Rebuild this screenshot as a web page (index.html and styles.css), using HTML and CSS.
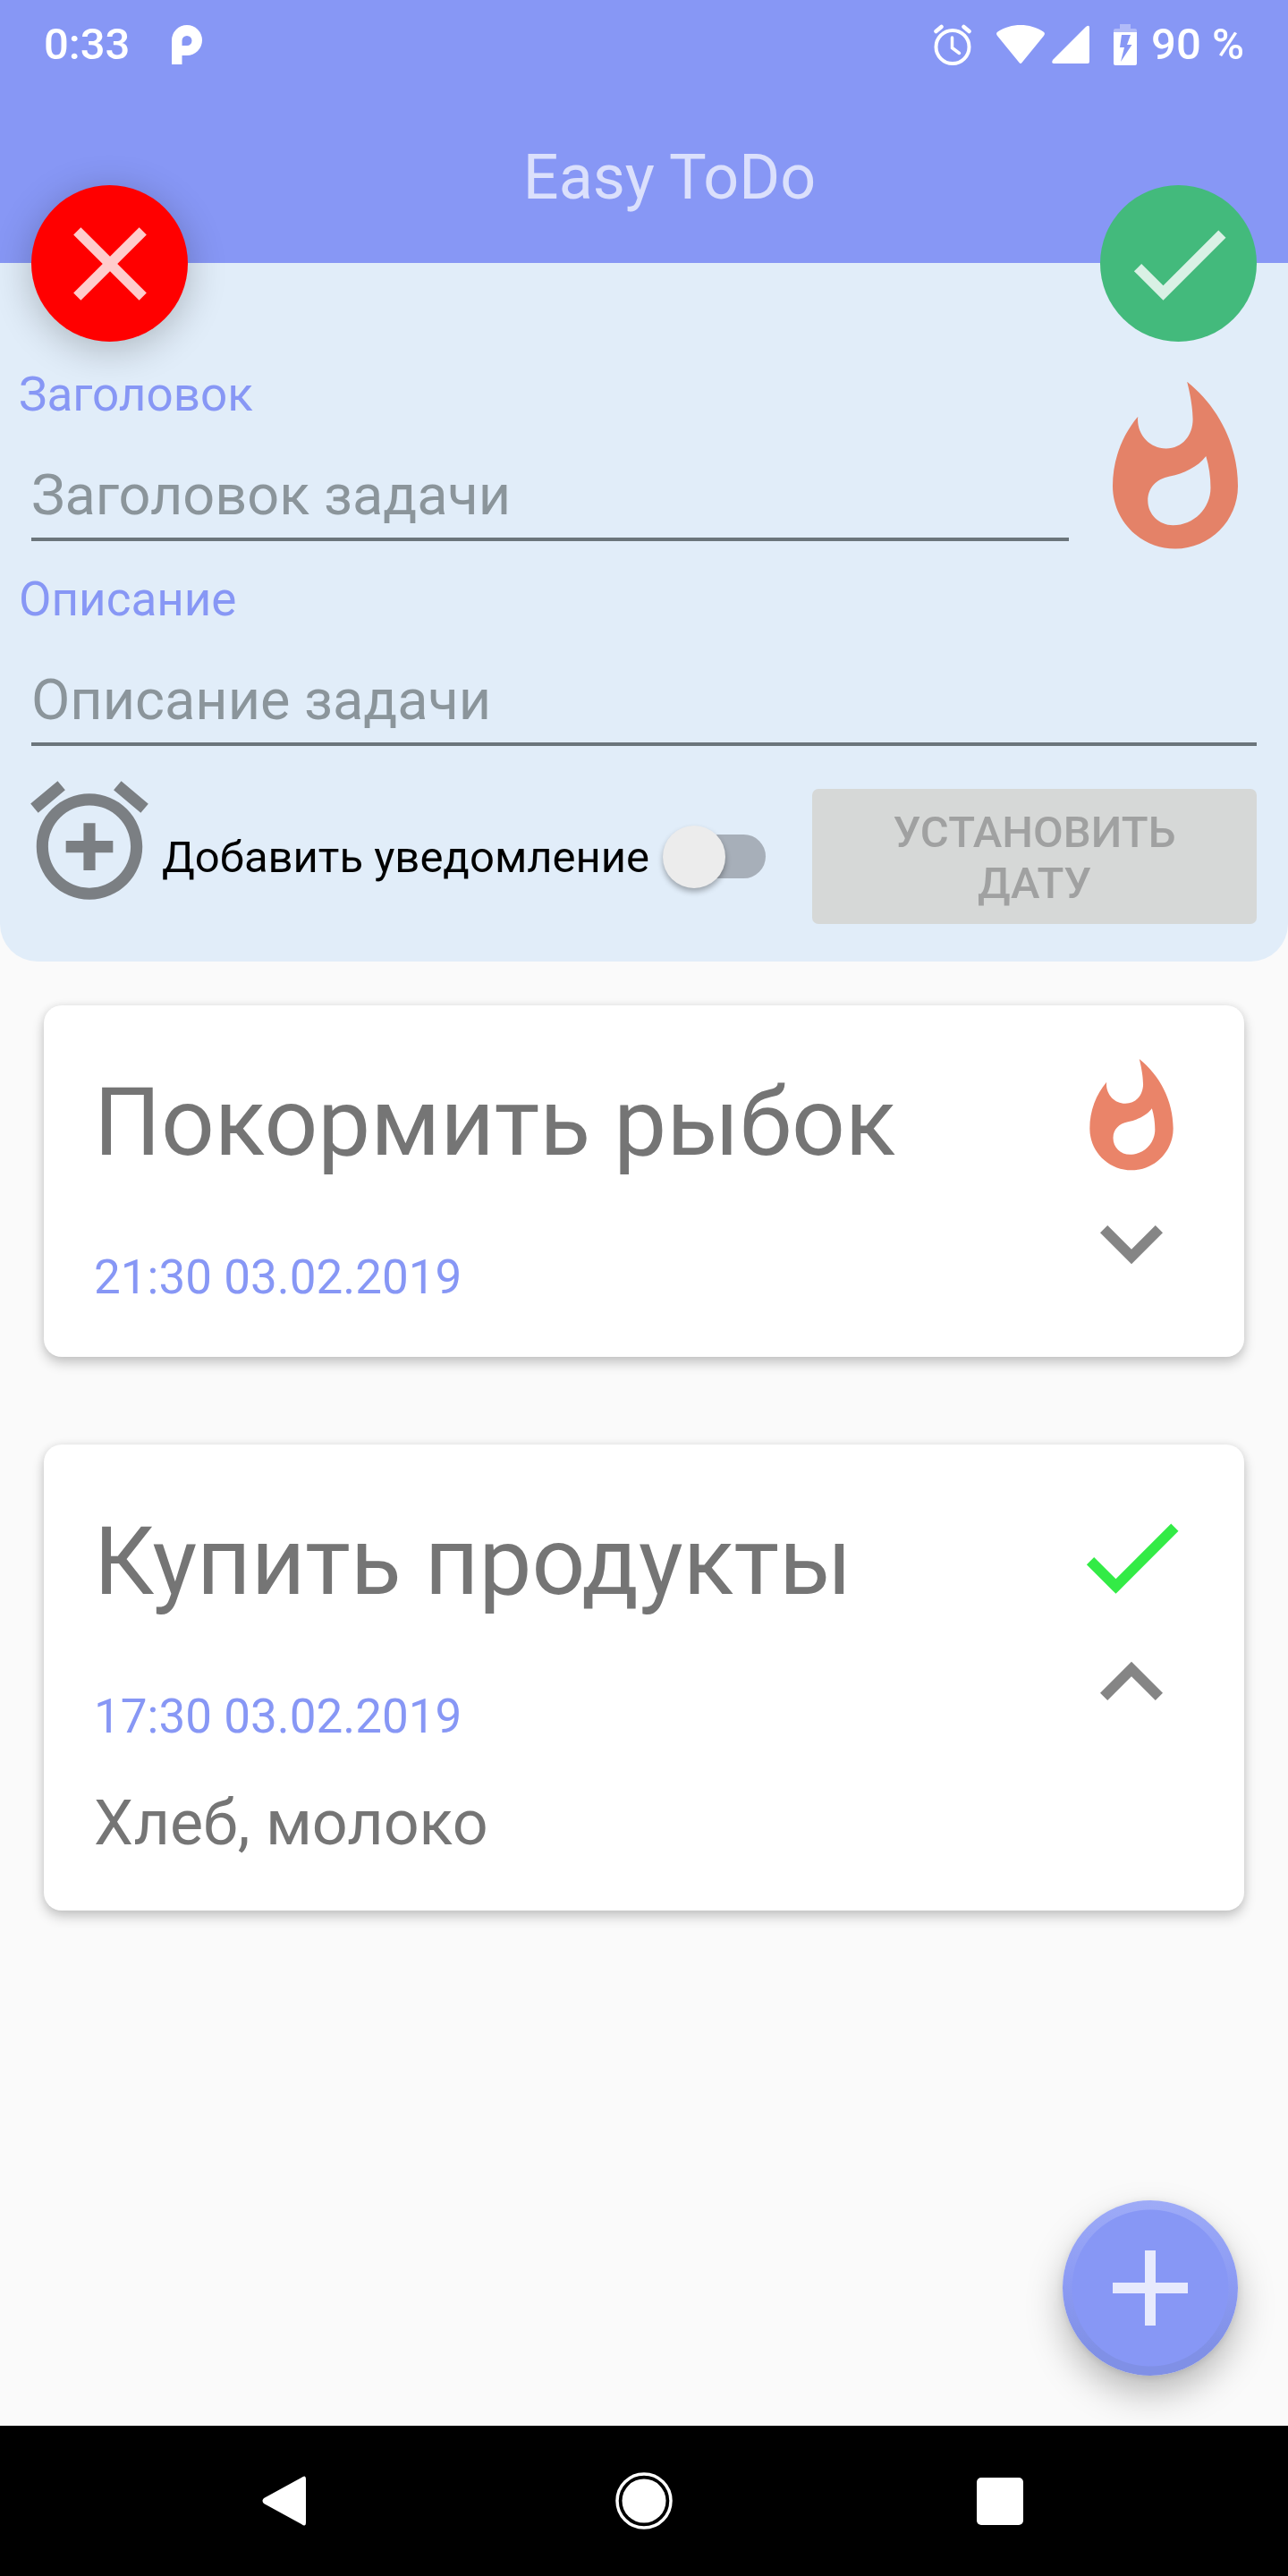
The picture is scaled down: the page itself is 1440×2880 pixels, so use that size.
FILE: index.html
```html
<!DOCTYPE html>
<html lang="ru">
<head>
<meta charset="utf-8">
<meta name="viewport" content="width=device-width, initial-scale=1">
<title>Easy ToDo</title>
<link rel="stylesheet" href="styles.css">
</head>
<body>
<header class="app-header">
  <div class="status-bar">
    <div class="status-group">
      <span class="clock">0:33</span>
      <svg class="carrier" viewBox="0 0 34 44" aria-hidden="true"><path fill-rule="evenodd" d="M0 44V17a17 17 0 1 1 17 17h-5.500v10zM11.500 23H17a5.500 5.500 0 1 0-5.500-5.500z"/></svg>
    </div>
    <div class="status-group">
      <svg class="status-alarm" viewBox="0 0 42 46" aria-hidden="true"><g fill="none" stroke="#fff" stroke-linecap="round"><circle cx="21" cy="25.500" r="18.500" stroke-width="4"/><path d="M20.500 15v11.500l8 6" stroke-width="3.500"/><path d="M2.500 8l6-5M39.500 8l-6-5" stroke-width="4.500"/></g></svg>
      <svg class="status-wifi" viewBox="0 0 54 44" aria-hidden="true"><path d="M1 12C-.5 10 0 8.500 1.500 7.500 16-2.500 38-2.500 52.500 7.500 54 8.500 54.500 10 53 12L28.500 42q-1.500 2-3 0z"/></svg>
      <svg class="status-signal" viewBox="0 0 42 44" aria-hidden="true"><path d="M38 2q4-3 4 1v38q0 2-2 2H2q-3 0-1-4z"/></svg>
      <svg class="status-battery" viewBox="0 0 26 46" aria-hidden="true"><path fill-opacity=".35" d="M7 0h12v5h5q2 0 2 2v2H0V7q0-2 2-2h5z"/><path fill-rule="evenodd" d="M0 9h26v35q0 2-2 2H2q-2 0-2-2zM9 12 7 26h5l-4 16 12.500-19H15l4-11z"/></svg>
      <span class="battery-level">90 %</span>
    </div>
  </div>
  <h1 class="app-title">Easy ToDo</h1>
</header>

<main class="content">
  <form class="editor">
    <button class="round-button cancel" type="button" aria-label="Отмена">
      <svg viewBox="0 0 24 24" aria-hidden="true"><path d="M19 6.410L17.590 5 12 10.590 6.410 5 5 6.410 10.590 12 5 17.590 6.410 19 12 13.410 17.590 19 19 17.590 13.410 12z"/></svg>
    </button>
    <button class="round-button confirm" type="button" aria-label="Сохранить">
      <svg viewBox="0 0 24 24" aria-hidden="true"><path d="M9 16.170L4.830 12l-1.420 1.410L9 19 21 7l-1.410-1.410z"/></svg>
    </button>

    <div class="title-row">
      <div class="field">
        <label for="task-title">Заголовок</label>
        <input id="task-title" type="text" placeholder="Заголовок задачи">
      </div>
      <button class="priority" type="button" aria-label="Срочная задача">
        <svg viewBox="0 0 24 24" aria-hidden="true"><path d="M13.500.67s.74 2.650.74 4.800c0 2.060-1.350 3.730-3.410 3.730-2.070 0-3.630-1.670-3.630-3.730l.03-.36C5.210 7.510 4 10.620 4 14c0 4.420 3.580 8 8 8s8-3.580 8-8C20 8.610 17.410 3.800 13.500.67zM11.710 19c-1.780 0-3.220-1.400-3.220-3.140 0-1.620 1.050-2.760 2.810-3.120 1.770-.36 3.600-1.210 4.620-2.580.39 1.290.59 2.650.59 4.040 0 2.650-2.150 4.800-4.800 4.800z"/></svg>
      </button>
    </div>

    <div class="field field-wide">
      <label for="task-text">Описание</label>
      <input id="task-text" type="text" placeholder="Описание задачи">
    </div>

    <div class="notify-row">
      <svg class="notify-icon" viewBox="0 0 24 24" aria-hidden="true"><path d="M7.880 3.390L6.600 1.860 2 5.710l1.290 1.530 4.590-3.850zM22 5.720l-4.600-3.860-1.290 1.530 4.600 3.860L22 5.720zM12 4c-4.970 0-9 4.030-9 9s4.020 9 9 9c4.970 0 9-4.030 9-9s-4.030-9-9-9zm0 16c-3.870 0-7-3.130-7-7s3.130-7 7-7 7 3.130 7 7-3.130 7-7 7zm1-11h-2v3H8v2h3v3h2v-3h3v-2h-3V9z"/></svg>
      <label class="notify-label" for="notify">Добавить уведомление</label>
      <input class="switch" id="notify" type="checkbox">
      <button class="date-button" type="button" disabled>УСТАНОВИТЬ ДАТУ</button>
    </div>
  </form>

  <section class="tasks">
    <article class="card">
      <div class="card-text">
        <h2>Покормить рыбок</h2>
        <time datetime="2019-02-03T21:30">21:30 03.02.2019</time>
      </div>
      <div class="card-icons">
        <svg class="flame" viewBox="0 0 24 24" aria-hidden="true"><path d="M13.500.67s.74 2.650.74 4.800c0 2.060-1.350 3.730-3.410 3.730-2.070 0-3.630-1.670-3.630-3.730l.03-.36C5.210 7.510 4 10.620 4 14c0 4.420 3.580 8 8 8s8-3.580 8-8C20 8.610 17.410 3.800 13.500.67zM11.710 19c-1.780 0-3.220-1.400-3.220-3.140 0-1.620 1.050-2.760 2.810-3.120 1.770-.36 3.600-1.210 4.620-2.580.39 1.290.59 2.650.59 4.040 0 2.650-2.150 4.800-4.800 4.800z"/></svg>
        <button class="toggle" type="button" aria-label="Развернуть">
          <svg viewBox="0 0 24 24" aria-hidden="true"><path d="M16.590 8.590L12 13.170 7.410 8.590 6 10l6 6 6-6z"/></svg>
        </button>
      </div>
    </article>

    <article class="card">
      <div class="card-text">
        <h2>Купить продукты</h2>
        <time datetime="2019-02-03T17:30">17:30 03.02.2019</time>
        <p>Хлеб, молоко</p>
      </div>
      <div class="card-icons">
        <svg class="done" viewBox="0 0 24 24" aria-hidden="true"><path d="M9 16.170L4.830 12l-1.420 1.410L9 19 21 7l-1.410-1.410z"/></svg>
        <button class="toggle" type="button" aria-label="Свернуть">
          <svg viewBox="0 0 24 24" aria-hidden="true"><path d="M12 8l-6 6 1.410 1.410L12 10.830l4.590 4.580L18 14z"/></svg>
        </button>
      </div>
    </article>
  </section>

  <button class="fab" type="button" aria-label="Добавить задачу">
    <svg viewBox="0 0 24 24" aria-hidden="true"><path d="M19 13h-6v6h-2v-6H5v-2h6V5h2v6h6v2z"/></svg>
  </button>
</main>

<nav class="system-nav">
  <button type="button" aria-label="Назад"><svg viewBox="0 0 98 98" aria-hidden="true"><path d="M64 23q5-4 5 2v48q0 6-5 2L22 52q-3-3 0-6z"/></svg></button>
  <button type="button" aria-label="Домой"><svg viewBox="0 0 98 98" aria-hidden="true"><circle cx="49" cy="49" r="24.500"/><circle cx="49" cy="49" r="30" fill="none" stroke="#fff" stroke-width="3.500"/></svg></button>
  <button type="button" aria-label="Обзор"><svg viewBox="0 0 98 98" aria-hidden="true"><rect x="23" y="23" width="52" height="53" rx="5"/></svg></button>
</nav>
</body>
</html>
```
FILE: styles.css
```css
:root {
  --accent: #8797f5;
  --panel: #e1edf9;
  --grey-text: #757575;
}

* {
  box-sizing: border-box;
}

body {
  margin: 0;
  min-height: 100vh;
  display: flex;
  flex-direction: column;
  background: #fafafa;
  font-family: Roboto, "Liberation Sans", sans-serif;
}

button {
  border: 0;
  padding: 0;
  background: none;
  font: inherit;
}

svg {
  display: block;
  fill: #fff;
}

/* Header */
.app-header {
  background: var(--accent);
}

.status-bar {
  height: 98px;
  padding: 2px 49px 0;
  display: flex;
  align-items: center;
  justify-content: space-between;
  color: #fff;
  font-size: 49px;
  line-height: 60px;
  font-weight: 500;
}

.status-group {
  display: flex;
  align-items: center;
}

.carrier {
  width: 34px;
  margin-left: 47px;
}

.status-alarm {
  width: 42px;
  margin-right: 28px;
}

.status-wifi {
  width: 54px;
  margin-right: 8px;
}

.status-signal {
  width: 42px;
  margin-right: 27px;
}

.status-battery {
  width: 26px;
  margin-right: 16px;
}

.app-title {
  margin: 0;
  padding: 58px 0 54px 57px;
  color: rgba(255, 255, 255, 0.7);
  font-size: 70px;
  line-height: 84px;
  font-weight: 400;
  text-align: center;
}

/* Main area */
.content {
  flex: 1;
  position: relative;
}

/* Task editor */
.editor {
  position: relative;
  padding: 116px 21px 21px;
  background: var(--panel);
  border-radius: 0 0 42px 42px;
}

.round-button {
  position: absolute;
  top: -87px;
  width: 175px;
  height: 175px;
  display: grid;
  place-items: center;
  border-radius: 50%;
}

.round-button svg {
  width: 140px;
  fill: rgba(255, 255, 255, 0.8);
}

.cancel {
  left: 35px;
  background: #f00;
  box-shadow: 0 8px 44px rgba(0, 0, 0, 0.24);
}

.confirm {
  right: 35px;
  background: #43ba7c;
}

.title-row {
  display: flex;
  gap: 14px;
  margin-bottom: 8px;
}

.field {
  flex: 1;
  display: flex;
  flex-direction: column;
  color: var(--accent);
  font-size: 53px;
  line-height: 62px;
}

.field input {
  height: 133px;
  margin-left: 14px;
  padding: 44px 0 11px;
  border: 0;
  border-bottom: 4px solid #6b757b;
  border-radius: 0;
  outline: 0;
  background: none;
  color: #212121;
  font: 400 63px/74px Roboto, "Liberation Sans", sans-serif;
}

.field input::placeholder {
  color: #8b959b;
  opacity: 1;
}

.field-wide input {
  margin-right: 14px;
}

.priority {
  align-self: flex-end;
  margin-top: 11px;
}

.priority svg {
  width: 210px;
  fill: #e48268;
}

.notify-row {
  margin-top: 27px;
  display: flex;
  align-items: center;
}

.notify-icon {
  width: 158px;
  align-self: flex-start;
  fill: #7b7f83;
}

.notify-label {
  padding: 2px 0 0 2px;
  color: #000;
  font-size: 49px;
  line-height: 58px;
  white-space: nowrap;
}

.switch {
  appearance: none;
  position: relative;
  flex: none;
  width: 110px;
  height: 49px;
  margin: 0 0 0 20px;
  border-radius: 25px;
  background: #a7afb9;
}

.switch::before {
  content: "";
  position: absolute;
  top: -10px;
  left: -5px;
  width: 70px;
  height: 70px;
  border-radius: 50%;
  background: #ececec;
  box-shadow: 0 4px 6px rgba(0, 0, 0, 0.3);
}

.switch:checked::before {
  left: 45px;
}

.date-button {
  flex: 1;
  margin: 21px 14px 21px 52px;
  padding: 20px 28px 17px;
  border-radius: 7px;
  background: #d6d8d7;
  color: #a0a1a1;
  font-size: 49px;
  line-height: 57px;
  font-weight: 500;
}

/* Task cards */
.tasks {
  display: flex;
  flex-direction: column;
  gap: 98px;
  padding: 49px;
}

.card {
  display: flex;
  justify-content: space-between;
  padding: 56px 56px 57px;
  border-radius: 20px;
  background: #fff;
  box-shadow: 0 7px 14px rgba(0, 0, 0, 0.2), 0 0 10px rgba(0, 0, 0, 0.08);
}

.card-text {
  padding-top: 14px;
  color: var(--grey-text);
}

.card h2 {
  margin: 0 0 80px;
  font-size: 105px;
  line-height: 123px;
  font-weight: 400;
}

.card time {
  display: block;
  color: var(--accent);
  font-size: 53px;
  line-height: 62px;
}

.card p {
  margin: 47px 0 0;
  font-size: 70px;
  line-height: 82px;
}

.card-icons svg {
  width: 140px;
}

.flame {
  fill: #ea8469;
}

.done {
  fill: #33eb46;
}

.toggle {
  display: block;
}

.toggle svg {
  fill: #858585;
}

/* Floating action button */
.fab {
  position: absolute;
  right: 56px;
  bottom: 56px;
  width: 196px;
  height: 196px;
  display: grid;
  place-items: center;
  border-radius: 50%;
  background:
    radial-gradient(circle, var(--accent) 87px, transparent 88px),
    linear-gradient(#9eabf7, #8c9bf4 45%, #8090e6 85%);
  box-shadow: 0 20px 40px rgba(0, 0, 0, 0.26), 0 2px 8px rgba(0, 0, 0, 0.1);
}

.fab svg {
  width: 144px;
  fill: #e7eafd;
}

/* System navigation */
.system-nav {
  display: flex;
  padding: 35px 123px;
  background: #000;
}

.system-nav button {
  flex: 1;
  display: flex;
  justify-content: center;
}

.system-nav svg {
  width: 98px;
}
```
